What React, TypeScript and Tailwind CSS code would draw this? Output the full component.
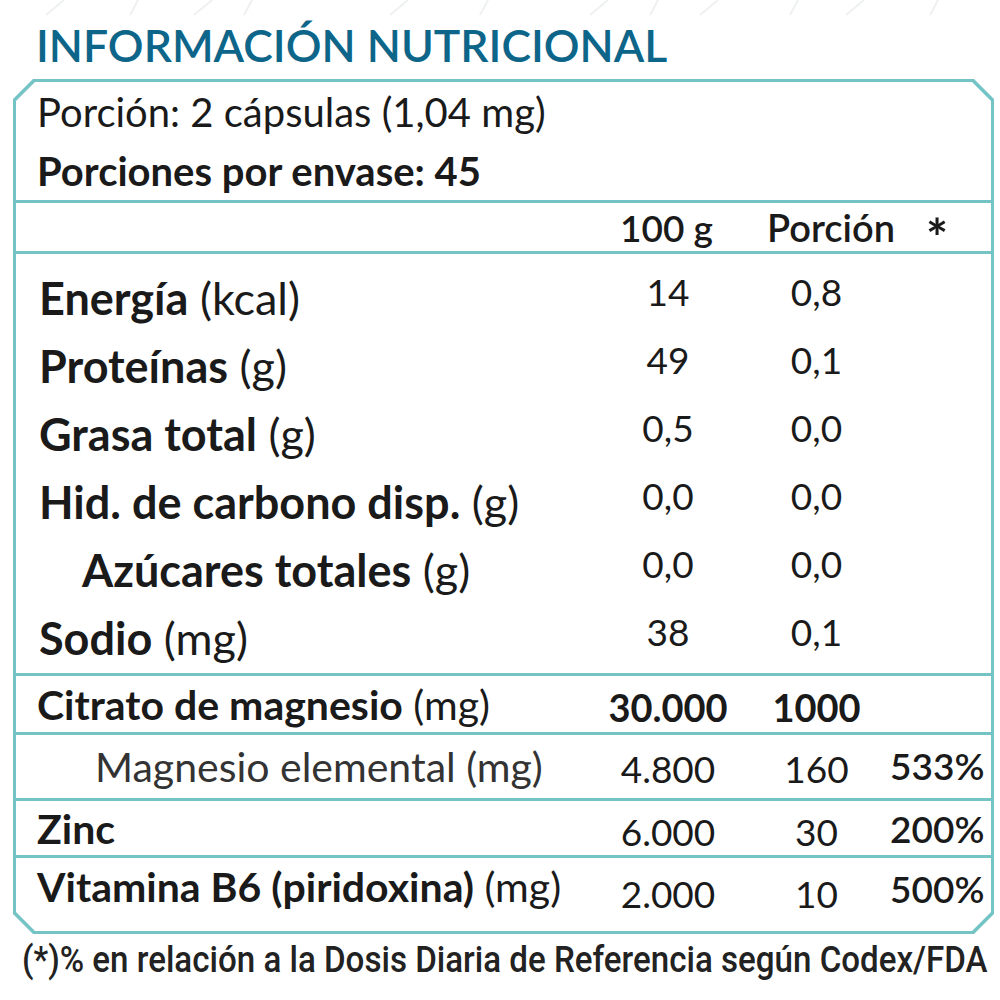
import React from "react";

const font = { fontFamily: "Lato, 'Open Sans', sans-serif" };

type Row = { b: string; r: string; v1: string; v2: string; indent?: boolean };

const rows: Row[] = [
  { b: "Energía", r: " (kcal)", v1: "14", v2: "0,8" },
  { b: "Proteínas", r: " (g)", v1: "49", v2: "0,1" },
  { b: "Grasa total", r: " (g)", v1: "0,5", v2: "0,0" },
  { b: "Hid. de carbono disp.", r: " (g)", v1: "0,0", v2: "0,0" },
  { b: "Azúcares totales", r: " (g)", v1: "0,0", v2: "0,0", indent: true },
  { b: "Sodio", r: " (mg)", v1: "38", v2: "0,1" },
];

export default function App() {
  return (
    <div
      className="w-[1000px] h-[1000px] bg-white relative overflow-hidden text-[#1a1a1a]"
      style={font}
    >
      {/* faint decorative lines at top */}
      <svg className="absolute left-0 top-0" width="1000" height="16">
        {[28, 70, 102, 127, 200, 245, 300, 330, 355, 400, 428, 470, 510].map((x, i) => (
          <line
            key={i}
            x1={x * 2 - 10}
            y1={15}
            x2={x * 2 + (i % 2 ? -2 : 8)}
            y2={0}
            stroke="#eef0f1"
            strokeWidth="2"
          />
        ))}
      </svg>

      <div className="pt-[21px] pl-[36px] h-[79px]">
        <h1 className="text-[44.5px] leading-[48px] font-semibold text-[#0d6689]">
          INFORMACIÓN NUTRICIONAL
        </h1>
      </div>

      {/* Box with chamfered corners */}
      <div
        className="ml-[13px] w-[981px] h-[855px] bg-[#74c3c5] p-[3px]"
        style={{
          clipPath:
            "polygon(20px 0, calc(100% - 20px) 0, 100% 20px, 100% calc(100% - 20px), calc(100% - 20px) 100%, 20px 100%, 0 calc(100% - 20px), 0 20px)",
        }}
      >
        <div
          className="w-full h-full bg-white flex flex-col"
          style={{
            clipPath:
              "polygon(19px 0, calc(100% - 19px) 0, 100% 19px, 100% calc(100% - 19px), calc(100% - 19px) 100%, 19px 100%, 0 calc(100% - 19px), 0 19px)",
          }}
        >
          {/* Serving info */}
          <div className="h-[121px] border-b-[3px] border-[#74c3c5] pl-[21px] pt-[10px]">
            <div className="text-[40px] leading-[40px]">Porción: 2 cápsulas (1,04 mg)</div>
            <div className="text-[40px] leading-[40px] font-bold mt-[19px]">
              Porciones por envase: 45
            </div>
          </div>

          {/* Header row */}
          <div className="h-[51px] border-b-[3px] border-[#74c3c5] grid grid-cols-[604px_147px_159px_1fr] items-center text-[37px] font-semibold leading-none">
            <div />
            <div>100 g</div>
            <div className="text-[38px]">Porción</div>
            <div className="text-[52px] font-bold leading-none h-[37px] pt-[2px]">*</div>
          </div>

          {/* Main nutrients */}
          <div className="h-[422px] border-b-[3px] border-[#74c3c5] pt-[10px] flex flex-col">
            {rows.map((row, i) => (
              <div
                key={i}
                className="h-[68px] grid grid-cols-[577px_150px_147px_1fr] items-center"
              >
                <div
                  className={`text-[45px] leading-none ${row.indent ? "pl-[66px]" : "pl-[23px]"}`}
                >
                  <span className="font-bold">{row.b}</span>
                  <span>{row.r}</span>
                </div>
                <div className="text-center text-[37px] leading-none pb-[14px]">{row.v1}</div>
                <div className="text-center text-[37px] leading-none pb-[14px]">{row.v2}</div>
                <div />
              </div>
            ))}
          </div>

          {/* Citrato */}
          <div className="h-[59px] border-b-[3px] border-[#74c3c5] grid grid-cols-[577px_150px_147px_1fr] items-center text-[41px] leading-none">
            <div className="pl-[21px]">
              <span className="font-bold">Citrato de magnesio</span>
              <span> (mg)</span>
            </div>
            <div className="text-center font-bold text-[38px] pt-[6px]">30.000</div>
            <div className="text-center font-bold text-[38px] pt-[6px]">1000</div>
            <div />
          </div>

          {/* Magnesio elemental */}
          <div className="h-[66px] border-b-[3px] border-[#74c3c5] grid grid-cols-[577px_150px_147px_1fr] items-center text-[37px] leading-none">
            <div className="pl-[79px] text-[#333] text-[41px]">Magnesio elemental (mg)</div>
            <div className="text-center pt-[4px]">4.800</div>
            <div className="text-center pt-[4px]">160</div>
            <div className="text-right pr-[8px] font-semibold -mt-[2px]">533%</div>
          </div>

          {/* Zinc */}
          <div className="h-[57px] border-b-[3px] border-[#74c3c5] grid grid-cols-[577px_150px_147px_1fr] items-center text-[37px] leading-none">
            <div className="pl-[21px] font-bold text-[41px]">Zinc</div>
            <div className="text-center pt-[6px]">6.000</div>
            <div className="text-center pt-[6px]">30</div>
            <div className="text-right pr-[8px] font-semibold">200%</div>
          </div>

          {/* Vitamina B6 */}
          <div className="flex-1 grid grid-cols-[577px_150px_147px_1fr] items-start pt-[8px] text-[37px] leading-none">
            <div className="pl-[21px] text-[41px]">
              <span className="font-bold">Vitamina B6 (piridoxina)</span>
              <span> (mg)</span>
            </div>
            <div className="text-center pt-[9px]">2.000</div>
            <div className="text-center pt-[9px]">10</div>
            <div className="text-right pr-[8px] font-semibold pt-[4px]">500%</div>
          </div>
        </div>
      </div>

      {/* Footer */}
      <div className="pl-[22px] pt-[8px]">
        <div
          className="text-[36px] leading-none font-medium text-[#222] origin-left scale-x-[0.92] whitespace-nowrap"
          style={{ fontFamily: "Roboto, 'Noto Sans', sans-serif" }}
        >
          (*)% en relación a la Dosis Diaria de Referencia según Codex/FDA
        </div>
      </div>
    </div>
  );
}
